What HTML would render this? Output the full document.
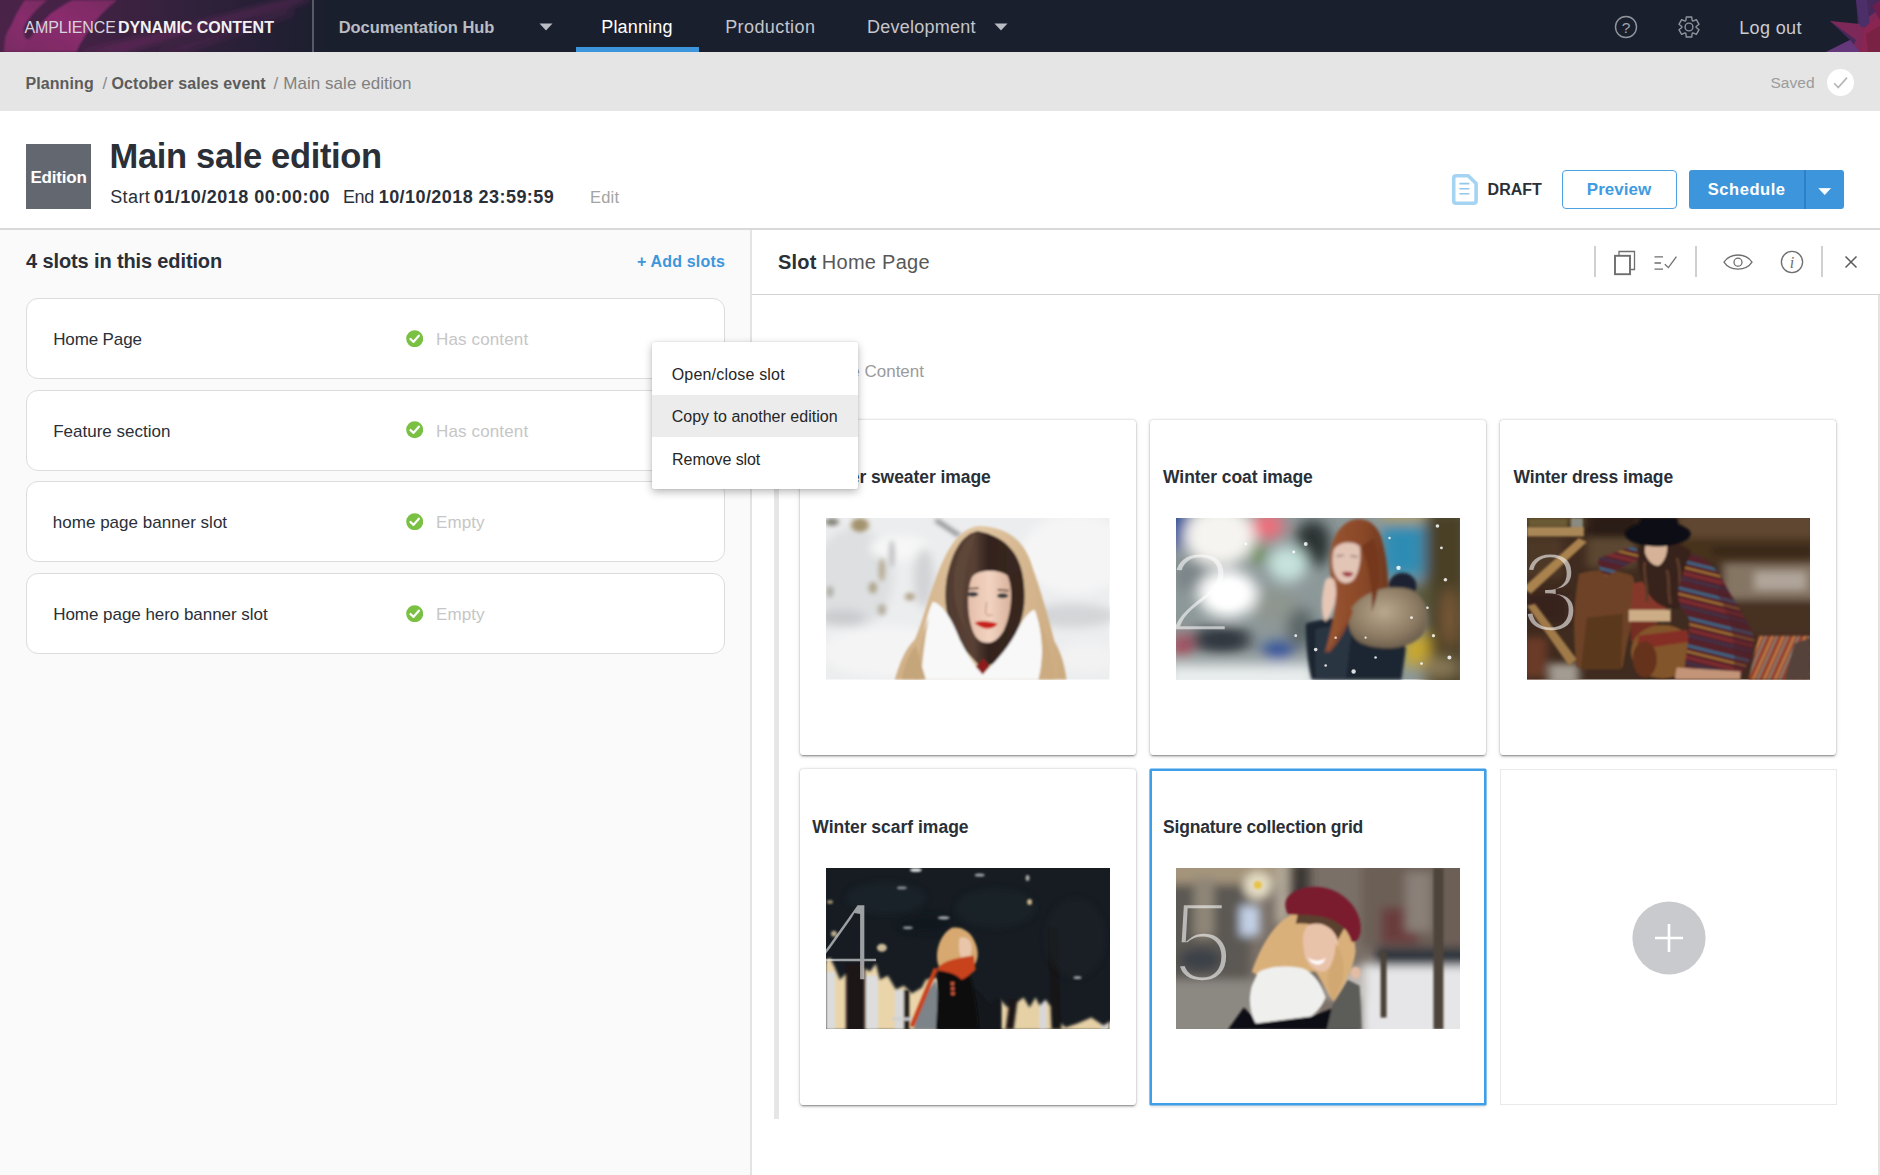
<!DOCTYPE html>
<html lang="en"><head>
<meta charset="utf-8">
<title>Main sale edition</title>
<style>
*{box-sizing:border-box;margin:0;padding:0}
html,body{width:1880px;height:1175px;overflow:hidden;background:#fff}
body{font-family:"Liberation Sans",sans-serif;color:#2a2f38;position:relative}
.abs{position:absolute;white-space:nowrap}
.b{font-weight:bold}
/* header */
#hdr{position:absolute;left:0;top:0;width:1880px;height:52px;background:#1a1f2d;overflow:hidden}
#crumb{position:absolute;left:0;top:52px;width:1880px;height:59px;background:#e5e5e5}
#titlebar{position:absolute;left:0;top:111px;width:1880px;height:119px;background:#fff;border-bottom:2px solid #d9d9d9}
#left{position:absolute;left:0;top:230px;width:752px;height:945px;background:#fafafa;border-right:2px solid #e3e3e3}
#right{position:absolute;left:752px;top:230px;width:1128px;height:945px;background:#fff}
.nav{position:absolute;top:15px;font-size:18px;color:#c4c6cc;white-space:nowrap;line-height:24px}
.slot{position:absolute;left:26px;width:698.6px;height:81px;background:#fff;border:1.5px solid #dcdcdc;border-radius:12px}
.slot .nm{position:absolute;left:26px;top:29px;font-size:17px;line-height:22px;color:#2a2f38;white-space:nowrap}
.slot .st{position:absolute;left:409px;top:29px;font-size:17px;line-height:22px;color:#c6c6c6;white-space:nowrap}
.slot svg{position:absolute;left:378.9px;top:30.8px;width:17.4px;height:17.4px}
.card{position:absolute;width:336.2px;height:335.4px;background:#fff;border-radius:3px;box-shadow:0 3px 1px -2px rgba(0,0,0,.2),0 2px 2px 0 rgba(0,0,0,.14),0 1px 5px 0 rgba(0,0,0,.12),0 0 1.5px rgba(0,0,0,.3)}
.card .ttl{position:absolute;left:13px;top:45px;font-size:18px;line-height:24px;font-weight:bold;color:#2a2f38;white-space:nowrap}
.card svg.im{position:absolute;left:26.8px;top:98.5px;width:283.4px;height:161.5px}
.card.sel{border:2px solid #3f9ee8;border-radius:1px;box-shadow:0 0 0 .6px #3f9ee8,0 2px 3px rgba(0,0,0,.12)}
.card.sel .ttl{left:12px;top:44px}
.card.sel svg.im{left:24.8px;top:96.5px}
</style>
</head>
<body>
<div id="hdr">
<svg class="abs" style="left:0;top:0" width="330" height="52" viewBox="0 0 330 52">
<defs>
<linearGradient id="lg1" x1="0" x2="1" y1="0" y2="0"><stop offset="0" stop-color="#4b2349"></stop><stop offset=".3" stop-color="#402243"></stop><stop offset=".6" stop-color="#30213b"></stop><stop offset=".85" stop-color="#221f33"></stop><stop offset="1" stop-color="#1a1f2d"></stop></linearGradient>
<linearGradient id="lg2" x1="0" x2="1" y1="1" y2="0"><stop offset="0" stop-color="#7c2a64"></stop><stop offset=".5" stop-color="#8e2d70"></stop><stop offset="1" stop-color="#7a2a62"></stop></linearGradient>
<filter id="bl1" x="-20%" y="-20%" width="140%" height="140%"><feGaussianBlur stdDeviation="0.9"></feGaussianBlur></filter>
<filter id="bl3" x="-20%" y="-20%" width="140%" height="140%"><feGaussianBlur stdDeviation="3.5"></feGaussianBlur></filter>
</defs>
<rect width="330" height="52" fill="url(#lg1)"></rect>
<g filter="url(#bl1)">
<path d="M24.700 0 L47.600 0 C38 8 30 16 24.700 25.500 C23 30 24 35 26 39 L37 40 L30 52 L4 52 C4 46 5 42 5 38 C7 32 9 28 11 25.500 C15 16 20 7 24.700 0Z" fill="url(#lg2)" opacity=".92"></path>
<path d="M73 0 L117.400 0 C104 10 92 24 84 38 C80 44 78 48 76.600 52 L21 52 C28 40 38 26 50 14 C58 8 66 3 73 0Z" fill="url(#lg2)" opacity=".95"></path>
</g>
<g filter="url(#bl3)">
<path d="M76 52 C110 46 170 30 300 -4 L312 0 C200 30 150 44 124 52Z" fill="#7a2a68" opacity=".5"></path>
<path d="M150 52 C190 42 230 28 290 8 L296 14 C240 34 200 46 184 52Z" fill="#5e2858" opacity=".4"></path>
</g>
</svg>
<div id="h_a" class="abs" style="left: 24.4px; top: 18px; font-size: 16px; line-height: 20px; color: rgb(216, 212, 220); letter-spacing: -0.12px; right: auto;">AMPLIENCE</div>
<div id="h_d" class="abs b" style="left: 117.9px; top: 18px; font-size: 16px; line-height: 20px; color: rgb(242, 242, 242); letter-spacing: -0.03px; right: auto;">DYNAMIC CONTENT</div>
<div class="abs" style="left:312px;top:0;width:1.5px;height:52px;background:#555b66"></div>
<div id="n_doc" class="nav b" style="left: 338.7px; color: rgb(185, 188, 195); font-size: 16.5px; letter-spacing: -0.07px; right: auto; top: 15px;">Documentation Hub</div>
<svg class="abs" style="left:539px;top:23px" width="14" height="8" viewBox="0 0 14 8"><path d="M0.5 0.5 L13.5 0.5 L7 7.5Z" fill="#b9bcc3"></path></svg>
<div id="n_pl" class="nav" style="left: 601.3px; color: rgb(255, 255, 255); font-size: 18px; letter-spacing: 0.15px; right: auto; top: 15px;">Planning</div>
<div class="abs" style="left:576px;top:47px;width:123px;height:5px;background:#3d96dc"></div>
<div id="n_pr" class="nav" style="left: 725.2px; font-size: 18px; letter-spacing: 0.41px; right: auto; top: 15px;">Production</div>
<div id="n_dev" class="nav" style="left: 867px; font-size: 18px; letter-spacing: 0.25px; right: auto; top: 15px;">Development</div>
<svg class="abs" style="left:994px;top:23px" width="14" height="8" viewBox="0 0 14 8"><path d="M0.5 0.5 L13.5 0.5 L7 7.5Z" fill="#b9bcc3"></path></svg>
<svg class="abs" style="left:1613px;top:13.800px" width="26" height="26" viewBox="0 0 26 26"><circle cx="13" cy="13" r="10.500" fill="none" stroke="#91959e" stroke-width="1.400"/><text x="13" y="18.600" text-anchor="middle" font-family="Liberation Sans, sans-serif" font-size="15.500" fill="#a0a4ac">?</text></svg>
<svg class="abs" style="left:1676.600px;top:14.800px" width="24" height="24" viewBox="0 0 24 24"><path d="M8.84 5.53 L9.31 1.95 L14.69 1.95 L15.16 5.53 L16.03 6.03 L19.35 4.65 L22.05 9.31 L19.18 11.50 L19.18 12.50 L22.05 14.69 L19.35 19.35 L16.03 17.97 L15.16 18.47 L14.69 22.05 L9.31 22.05 L8.84 18.47 L7.97 17.97 L4.65 19.35 L1.95 14.69 L4.82 12.50 L4.82 11.50 L1.95 9.31 L4.65 4.65 L7.97 6.03Z" fill="none" stroke="#91959e" stroke-width="1.400" stroke-linejoin="round"/><circle cx="12" cy="12" r="3.900" fill="none" stroke="#91959e" stroke-width="1.400"/></svg>
<div id="n_lo" class="nav" style="left: 1739.2px; top: 16px; color: rgb(201, 203, 208); font-size: 18px; letter-spacing: 0.37px; right: auto;">Log out</div>
<svg class="abs" style="left:1820px;top:0" width="60" height="52" viewBox="0 0 60 52">
<path d="M36 0 L60 0 L60 52 L6 52 L30 40 L10 21 L38 26Z" fill="#46285a"></path>
<path d="M10 21 L40 24 L60 8 L60 52 L30 52 L36 40Z" fill="#7c2858"></path>
<path d="M36 0 L47 0 L50 30 L40 26Z" fill="#4c2e68"></path>
<path d="M44 28 L60 14 L60 52 L40 52Z" fill="#8a2450"></path>
<path d="M6 52 L30 40 L40 52Z" fill="#64387a"></path>
<path d="M52 6 L60 0 L60 20Z" fill="#6e1e4c"></path>
<path d="M46 34 L60 26 L60 52 L48 52Z" fill="#7a2244"></path>
</svg>
</div>
<div id="crumb">
<div id="c_p" class="abs b" style="left: 25.4px; top: 21px; font-size: 16px; line-height: 22px; color: rgb(92, 92, 92); letter-spacing: 0.11px; right: auto;">Planning</div>
<div class="abs" style="left:102.5px;top:21px;font-size:17px;line-height:22px;color:#8a8a8a">/</div>
<div id="c_o" class="abs b" style="left: 111.4px; top: 21px; font-size: 16px; line-height: 22px; color: rgb(92, 92, 92); letter-spacing: 0.12px; right: auto;">October sales event</div>
<div class="abs" style="left:273.5px;top:21px;font-size:17px;line-height:22px;color:#8a8a8a">/</div>
<div id="c_m" class="abs" style="left: 283.3px; top: 21px; font-size: 17px; line-height: 22px; color: rgb(128, 128, 128); letter-spacing: 0.04px; right: auto;">Main sale edition</div>
<div class="abs" style="left: 1770.4px; top: 21px; font-size: 15.5px; line-height: 20px; color: rgb(155, 155, 155); letter-spacing: 0.08px; right: auto;" id="c_s">Saved</div>
<svg class="abs" style="left:1827px;top:17px" width="27" height="27" viewBox="0 0 27 27"><circle cx="13.5" cy="13.5" r="13.5" fill="#fff"></circle><path d="M7.2 14.2 L11.2 18.6 L20 8.6" fill="none" stroke="#b5b5b5" stroke-width="1.6"></path></svg>
</div>
<div id="titlebar">
<div class="abs b" style="left:26px;top:32.6px;width:65.2px;height:65px;background:#636870;color:#fff;font-size:17px;line-height:68px;text-align:center;letter-spacing:-.2px"><span id="t_e">Edition</span></div>
<div id="t_m" class="abs b" style="left: 109.6px; top: 23px; font-size: 34.5px; line-height: 44px; color: rgb(42, 47, 56); letter-spacing: -0.34px; right: auto;">Main sale edition</div>
<div id="t_s" class="abs" style="left: 110.2px; top: 74px; font-size: 18px; line-height: 24px; color: rgb(42, 47, 56); letter-spacing: 0.41px; right: auto;">Start</div>
<div id="t_sd" class="abs b" style="left: 153.8px; top: 74px; font-size: 18px; line-height: 24px; color: rgb(42, 47, 56); letter-spacing: 0.48px; right: auto;">01/10/2018 00:00:00</div>
<div id="t_en" class="abs" style="left: 342.9px; top: 74px; font-size: 18px; line-height: 24px; color: rgb(42, 47, 56); letter-spacing: -0.39px; right: auto;">End</div>
<div id="t_ed2" class="abs b" style="left: 378.7px; top: 74px; font-size: 18px; line-height: 24px; color: rgb(42, 47, 56); letter-spacing: 0.44px; right: auto;">10/10/2018 23:59:59</div>
<div class="abs" style="left: 590px; top: 75px; font-size: 16.5px; line-height: 22px; color: rgb(163, 163, 163); letter-spacing: 0.21px; right: auto;" id="t_ed">Edit</div>
<svg class="abs" style="left:1450px;top:60px" width="30" height="36" viewBox="0 0 30 36"><path d="M6.200 4.700 L18.200 4.700 L26.100 12.600 L26.100 29.700 Q26.100 32.200 23.600 32.200 L6.200 32.200 Q3.700 32.200 3.700 29.700 L3.700 7.200 Q3.700 4.700 6.200 4.700Z" fill="#fff" stroke="#a5d4f2" stroke-width="3.600" stroke-linejoin="round"></path><path d="M9.400 12.600 H19.400 M9.400 17.700 H19.400 M9.400 22.800 H19.400" stroke="#93c7ea" stroke-width="1.600"></path></svg>
<div class="abs b" style="left: 1487.6px; top: 68px; font-size: 16px; line-height: 22px; color: rgb(42, 47, 56); letter-spacing: 0px; right: auto;" id="t_dr">DRAFT</div>
<div class="abs b" style="left:1561.5px;top:59px;width:115px;height:39px;border:1.5px solid #4da2e4;border-radius:4px;color:#3f9be2;font-size:17px;line-height:37px;text-align:center;font-weight:bold"><span id="t_pv">Preview</span></div>
<div class="abs" style="left:1689px;top:59px;width:155px;height:39px;background:#3d96dc;border-radius:3px"></div>
<div class="abs b" style="left: 1707.7px; top: 66px; font-size: 16.5px; line-height: 24px; color: rgb(255, 255, 255); letter-spacing: 0.57px; right: auto;" id="t_sc">Schedule</div>
<div class="abs" style="left:1804px;top:59px;width:1.5px;height:39px;background:#2f7fc4"></div>
<svg class="abs" style="left:1817.600px;top:76.900px" width="13.400" height="6.900" viewBox="0 0 13.400 6.900"><path d="M0.800 0.300 L12.600 0.300 L6.700 6.700Z" fill="#fff" stroke="#fff" stroke-width=".6" stroke-linejoin="round"></path></svg>
</div>
<div id="left">
<div id="l_h" class="abs b" style="left: 26.1px; top: 18px; font-size: 20px; line-height: 26px; color: rgb(42, 47, 56); letter-spacing: -0.13px; right: auto;">4 slots in this edition</div>
<div id="l_add" class="abs b" style="left: 637.1px; top: 21px; font-size: 16px; line-height: 22px; color: rgb(61, 150, 220); letter-spacing: 0.16px; right: auto;">+ Add slots</div>
<div class="slot" style="top:68px"><div class="nm" id="sn0" style="font-size: 17px; letter-spacing: -0.13px; right: auto; left: 26.2px; top: 30px;">Home Page</div><svg width="18" height="18" viewBox="0 0 18 18"><circle cx="9" cy="9" r="8.8" fill="#7ac143"></circle><path d="M4.6 9.3 L7.8 12.3 L13.3 5.9" fill="none" stroke="#fff" stroke-width="2.3" stroke-linecap="round" stroke-linejoin="round"></path></svg><div class="st" id="ss0" style="font-size: 17px; letter-spacing: 0.14px; right: auto; left: 409px; top: 30px;">Has content</div></div>
<div class="slot" style="top:159.6px"><div class="nm" id="sn1" style="font-size: 17px; letter-spacing: 0px; right: auto; left: 26.2px; top: 30.4px;">Feature section</div><svg width="18" height="18" viewBox="0 0 18 18"><circle cx="9" cy="9" r="8.8" fill="#7ac143"></circle><path d="M4.6 9.3 L7.8 12.3 L13.3 5.9" fill="none" stroke="#fff" stroke-width="2.3" stroke-linecap="round" stroke-linejoin="round"></path></svg><div class="st" id="ss1" style="font-size: 17px; letter-spacing: 0.14px; right: auto; left: 409px; top: 30.4px;">Has content</div></div>
<div class="slot" style="top:251.2px"><div class="nm" id="sn2" style="font-size: 17px; letter-spacing: 0.02px; right: auto; left: 25.8px; top: 29.8px;">home page banner slot</div><svg width="18" height="18" viewBox="0 0 18 18"><circle cx="9" cy="9" r="8.8" fill="#7ac143"></circle><path d="M4.6 9.3 L7.8 12.3 L13.3 5.9" fill="none" stroke="#fff" stroke-width="2.3" stroke-linecap="round" stroke-linejoin="round"></path></svg><div class="st" id="ss2" style="font-size: 17px; letter-spacing: 0.09px; right: auto; left: 409px; top: 29.8px;">Empty</div></div>
<div class="slot" style="top:342.8px"><div class="nm" id="sn3" style="font-size: 17px; letter-spacing: -0.04px; right: auto; left: 26.2px; top: 30.2px;">Home page hero banner slot</div><svg width="18" height="18" viewBox="0 0 18 18"><circle cx="9" cy="9" r="8.8" fill="#7ac143"></circle><path d="M4.6 9.3 L7.8 12.3 L13.3 5.9" fill="none" stroke="#fff" stroke-width="2.3" stroke-linecap="round" stroke-linejoin="round"></path></svg><div class="st" id="ss3" style="font-size: 17px; letter-spacing: 0.09px; right: auto; left: 409px; top: 30.2px;">Empty</div></div>
</div>
<div id="right">
<div id="r_s1" class="abs b" style="left: 25.9px; top: 19px; font-size: 20px; line-height: 26px; color: rgb(42, 47, 56); letter-spacing: 0.25px; right: auto;">Slot</div>
<div id="r_s2" class="abs" style="left: 69.8px; top: 19px; font-size: 20px; line-height: 26px; color: rgb(88, 88, 88); letter-spacing: 0.27px; right: auto;">Home Page</div>
<div class="abs" style="left:0;top:63.5px;width:1128px;height:1.5px;background:#d4d4d4"></div>
<div class="abs" style="left:1126px;top:65px;width:2px;height:880px;background:#e3e3e3"></div>
<div class="abs" style="left:842px;top:16px;width:1.5px;height:31px;background:#d0d0d0"></div>
<div class="abs" style="left:943px;top:16px;width:1.5px;height:31px;background:#d0d0d0"></div>
<div class="abs" style="left:1069px;top:16px;width:1.5px;height:31px;background:#d0d0d0"></div>
<svg class="abs" style="left:860px;top:19px" width="26" height="28" viewBox="0 0 26 28"><path d="M7 6.5 V2.5 H22.5 V20.5 H18.5" fill="none" stroke="#6e6e6e" stroke-width="1.3"></path><rect x="3" y="6.8" width="15" height="18.4" fill="none" stroke="#6e6e6e" stroke-width="1.9"></rect></svg>
<svg class="abs" style="left:901px;top:24px" width="26" height="18" viewBox="0 0 26 18"><path d="M1.5 2.8 H10 M1.5 9 H8 M1.5 15.2 H10" fill="none" stroke="#6e6e6e" stroke-width="1.3"></path><path d="M11.8 10.2 L15.4 13.6 L23.4 2.6" fill="none" stroke="#6e6e6e" stroke-width="1.3"></path></svg>
<svg class="abs" style="left:970px;top:22px" width="32" height="20" viewBox="0 0 32 20"><path d="M2 10.2 C8 0.6 24 0.6 30 10.2 C24 19.4 8 19.4 2 10.2Z" fill="none" stroke="#6e6e6e" stroke-width="1.3"></path><circle cx="16" cy="10.2" r="4" fill="none" stroke="#6e6e6e" stroke-width="1.3"></circle></svg>
<svg class="abs" style="left:1028px;top:20px" width="24" height="24" viewBox="0 0 24 24"><circle cx="12" cy="12" r="10.6" fill="none" stroke="#6e6e6e" stroke-width="1.3"></circle><text x="12" y="17.6" text-anchor="middle" font-family="Liberation Serif, serif" font-style="italic" font-size="16" fill="#6e6e6e">i</text></svg>
<svg class="abs" style="left:1092px;top:25px" width="14" height="14" viewBox="0 0 14 14"><path d="M1.5 1.5 L12.5 12.5 M12.5 1.5 L1.5 12.5" stroke="#5a5a5a" stroke-width="1.5"></path></svg>
<div id="r_cont" class="abs" style="right: 956px; top: 131px; font-size: 17px; line-height: 22px; color: rgb(155, 155, 155); letter-spacing: 0px;">Home Page Content</div>
<div class="abs" style="left:22px;top:112px;width:5px;height:777px;background:#e6e6e6"></div>
<!--CARDS--><div class="card" style="left:47.5px;top:189.7px"><div class="ttl" id="ct0" style="font-size: 17.5px; letter-spacing: -0.07px; right: auto; left: 12.8px; top: 45.3px;">Winter sweater image</div><svg class="im" viewBox="0 0 284 162" preserveAspectRatio="none">
<defs><filter id="f1a" x="-30%" y="-30%" width="160%" height="160%"><feGaussianBlur stdDeviation="5"></feGaussianBlur></filter><filter id="f1b" x="-10%" y="-10%" width="120%" height="120%"><feGaussianBlur stdDeviation="1.3"></feGaussianBlur></filter><filter id="f1c" x="-10%" y="-10%" width="120%" height="120%"><feGaussianBlur stdDeviation="2.4"></feGaussianBlur></filter>
<linearGradient id="g1h" x1="0" x2="1" y1="0" y2="0"><stop offset="0" stop-color="#4f3a30"></stop><stop offset=".35" stop-color="#5a4236"></stop><stop offset=".55" stop-color="#33231d"></stop><stop offset="1" stop-color="#3a2922"></stop></linearGradient>
<linearGradient id="g1f" x1="0" x2="1" y1="0" y2="0"><stop offset="0" stop-color="#e4bfaa"></stop><stop offset=".5" stop-color="#f1d3c1"></stop><stop offset="1" stop-color="#d9b29c"></stop></linearGradient>
<linearGradient id="g1k" x1="0" x2="1" y1="0" y2="0"><stop offset="0" stop-color="#cfae84"></stop><stop offset=".5" stop-color="#e0c6a2"></stop><stop offset="1" stop-color="#cba97e"></stop></linearGradient></defs>
<rect width="284" height="162" fill="#ecedee"></rect>
<g filter="url(#f1a)">
<ellipse cx="28" cy="60" rx="40" ry="50" fill="#dddfe1"></ellipse>
<ellipse cx="250" cy="36" rx="54" ry="40" fill="#f5f5f6"></ellipse>
<ellipse cx="246" cy="98" rx="44" ry="12" fill="#d4d5d8"></ellipse>
<ellipse cx="60" cy="134" rx="64" ry="26" fill="#f4f4f5"></ellipse>
<ellipse cx="16" cy="100" rx="24" ry="8" fill="#c9cacd"></ellipse>
<ellipse cx="74" cy="30" rx="30" ry="12" fill="#f7f7f7"></ellipse>
<ellipse cx="98" cy="60" rx="10" ry="30" fill="#d2d3d6"></ellipse>
<ellipse cx="262" cy="140" rx="30" ry="16" fill="#f2f2f3"></ellipse>
</g>
<g filter="url(#f1c)">
<ellipse cx="34" cy="7" rx="9" ry="7" fill="#a3936e"></ellipse>
<ellipse cx="6" cy="4" rx="7" ry="4" fill="#86847a"></ellipse>
<ellipse cx="56" cy="52" rx="3" ry="12" fill="#b3a88e"></ellipse>
<ellipse cx="47" cy="70" rx="4" ry="6" fill="#ada38b"></ellipse>
<ellipse cx="84" cy="79" rx="5" ry="4" fill="#b0a389"></ellipse>
<ellipse cx="56" cy="92" rx="4" ry="6" fill="#b5ad9d"></ellipse>
<ellipse cx="4" cy="74" rx="3" ry="6" fill="#a9a79f"></ellipse>
<path d="M110 2 L134 18" stroke="#86868a" stroke-width="4"></path>
<ellipse cx="66" cy="36" rx="3" ry="14" fill="#c1c1c4"></ellipse>
</g>
<g filter="url(#f1b)">
<path d="M153 8 C130 11 119 38 111 58 C101 84 97 104 89 122 C77 134 73 150 69 162 L241 162 C239 146 235 134 229 124 C223 100 215 72 207 50 C201 28 187 9 153 8Z" fill="url(#g1k)"></path>
<path d="M152 13 C133 17 125 40 121 60 C117 84 121 108 135 128 L156 151 L171 145 C187 128 199 104 199 80 C199 52 193 21 152 13Z" fill="url(#g1h)"></path>
<path d="M146 60 C150 52 172 50 182 58 C188 72 186 96 178 113 C170 127 158 129 150 119 C142 107 140 76 146 60Z" fill="url(#g1f)"></path>
<path d="M150 16 C142 40 136 64 138 100 C140 112 146 122 152 128 C140 116 126 92 128 60 C130 40 138 22 150 16Z" fill="#5d4638"></path>
<path d="M186 56 C190 76 190 100 176 126 C192 110 199 80 195 54Z" fill="#37251e"></path>
<ellipse cx="147" cy="76.500" rx="5.5" ry="2.4" fill="#3a3d3c"></ellipse>
<ellipse cx="177" cy="78" rx="5.5" ry="2.4" fill="#3a3d3c"></ellipse>
<path d="M143 71 L153 70.500 M172 72 L183 73" stroke="#4a342a" stroke-width="1.4"></path>
<path d="M161 84 C160 92 159 96 162 98 L167 97" fill="none" stroke="#d3a892" stroke-width="1.6"></path>
<path d="M149 105 C155 102.500 166 103.500 172 106 C168 112.500 156 112.500 149 105Z" fill="#c9211b"></path>
<path d="M107 84 C116 86 126 100 134 122 C142 138 150 150 157 157 C166 148 180 134 190 116 C196 104 202 94 209 92 C217 110 219 140 213 162 L93 162 C95 130 99 100 107 84Z" fill="#f8f8f8"></path>
<path d="M150 149 L157 157 L164 149 L158 141Z" fill="#8e1c1c"></path>
<path d="M95 162 C97 140 99 120 103 100 C99 110 93 130 89 162Z" fill="#ceae84"></path>
<path d="M213 162 C219 140 217 116 211 96 C221 116 227 140 229 162Z" fill="#cdab80"></path>
<path d="M76 162 C78 150 82 138 90 128 L100 162Z" fill="#c5a57a"></path>
</g>
</svg></div>
<div class="card" style="left:397.5px;top:189.7px"><div class="ttl" id="ct1" style="font-size: 17.5px; letter-spacing: -0.05px; right: auto; left: 13.5px; top: 45.3px;">Winter coat image</div><svg class="im" viewBox="0 0 284 162" preserveAspectRatio="none">
<defs><filter id="f2a" x="-30%" y="-30%" width="160%" height="160%"><feGaussianBlur stdDeviation="7"></feGaussianBlur></filter><filter id="f2b" x="-10%" y="-10%" width="120%" height="120%"><feGaussianBlur stdDeviation="1.4"></feGaussianBlur></filter><filter id="f2c" x="-20%" y="-20%" width="140%" height="140%"><feGaussianBlur stdDeviation="3"></feGaussianBlur></filter><filter id="f2d" x="-20%" y="-20%" width="140%" height="140%"><feGaussianBlur stdDeviation=".7"></feGaussianBlur></filter>
<linearGradient id="g2h" x1="0" x2="1" y1="0" y2="0"><stop offset="0" stop-color="#9a5632"></stop><stop offset=".6" stop-color="#8a4828"></stop><stop offset="1" stop-color="#6e381e"></stop></linearGradient>
<radialGradient id="g2f" cx=".45" cy=".4" r=".7"><stop offset="0" stop-color="#b9a88e"></stop><stop offset=".6" stop-color="#8c7a62"></stop><stop offset="1" stop-color="#5e5244"></stop></radialGradient></defs>
<rect width="284" height="162" fill="#8d9899"></rect>
<g filter="url(#f2a)">
<rect x="-10" y="-10" width="24" height="40" fill="#23489a"></rect>
<ellipse cx="44" cy="18" rx="36" ry="30" fill="#f6f4f0"></ellipse>
<ellipse cx="92" cy="8" rx="16" ry="14" fill="#ee6e7c"></ellipse>
<ellipse cx="82" cy="36" rx="9" ry="9" fill="#62883f"></ellipse>
<ellipse cx="137" cy="26" rx="18" ry="24" fill="#2a3232"></ellipse>
<ellipse cx="112" cy="46" rx="20" ry="18" fill="#c6e2dc"></ellipse>
<ellipse cx="16" cy="58" rx="18" ry="16" fill="#7a8488"></ellipse>
<ellipse cx="52" cy="76" rx="30" ry="24" fill="#ffffff"></ellipse>
<ellipse cx="100" cy="88" rx="22" ry="18" fill="#8f9690"></ellipse>
<ellipse cx="46" cy="122" rx="30" ry="14" fill="#2e363c"></ellipse>
<ellipse cx="6" cy="128" rx="10" ry="12" fill="#a84456"></ellipse>
<ellipse cx="102" cy="134" rx="16" ry="10" fill="#2a4f9c"></ellipse>
<ellipse cx="125" cy="110" rx="14" ry="20" fill="#5c6668"></ellipse>
<rect x="-10" y="146" width="150" height="30" fill="#eaeeee"></rect>
<rect x="206" y="4" width="42" height="54" fill="#2f8cb4"></rect>
<rect x="206" y="-6" width="42" height="10" fill="#c8a62c"></rect>
<rect x="250" y="-10" width="44" height="190" fill="#4a4026"></rect>
<rect x="228" y="118" width="26" height="30" fill="#c9a82e"></rect>
<ellipse cx="240" cy="80" rx="16" ry="14" fill="#5a5a3c"></ellipse>
<ellipse cx="264" cy="150" rx="20" ry="10" fill="#8a7a58"></ellipse>
<ellipse cx="274" cy="100" rx="8" ry="30" fill="#7a5a38"></ellipse>
</g>
<ellipse cx="52" cy="76" rx="15" ry="13" fill="#fff" filter="url(#f2c)"></ellipse>
<g filter="url(#f2b)">
<path d="M130 106 C148 100 176 98 200 104 C220 112 232 122 230 134 L226 162 L136 162 C132 146 130 126 130 106Z" fill="#1d2530"></path>
<path d="M140 112 C150 108 166 108 176 112 L170 162 L140 162Z" fill="#2b3542"></path>
<ellipse cx="227" cy="68" rx="14" ry="13" fill="#1a2230"></ellipse>
<path d="M182 1 C164 3 154 22 154 44 C154 60 158 72 160 84 C158 100 154 120 149 136 C160 124 170 104 178 92 L212 88 C214 66 212 40 206 20 C202 8 194 1 182 1Z" fill="url(#g2h)"></path>
<path d="M176 90 C190 72 214 66 236 72 C252 80 256 100 248 116 C236 132 206 134 186 126 C172 118 170 102 176 90Z" fill="url(#g2f)"></path>
<path d="M158 32 C162 24 176 22 184 28 C186 40 184 54 178 62 C172 68 164 66 160 58 C156 50 156 40 158 32Z" fill="#e3c5b6"></path>
<path d="M161 38 L168 37.500 M175 38 L182 39" stroke="#6a5a58" stroke-width="1.3"></path>
<path d="M166 55 C170 53 176 54 178 56 C175 60 169 60 166 55Z" fill="#9c2d3a"></path>
<path d="M150 62 C154 58 160 60 160 68 C162 80 158 94 150 104 C144 96 146 74 150 62Z" fill="#e6c6b5"></path>
<path d="M186 28 C194 50 198 76 196 94 C206 70 206 40 198 20Z" fill="#74391f"></path>
<path d="M176 92 C172 106 162 124 152 134" fill="none" stroke="#8e4a2a" stroke-width="3"></path>
</g>
<g fill="#fff" opacity=".85" filter="url(#f2d)"><circle cx="130" cy="26" r="2"></circle><circle cx="118" cy="34" r="1.5"></circle><circle cx="223" cy="50" r="2.2"></circle><circle cx="262" cy="8" r="1.8"></circle><circle cx="270" cy="62" r="1.8"></circle><circle cx="178" cy="154" r="2.2"></circle><circle cx="140" cy="132" r="1.8"></circle><circle cx="258" cy="118" r="1.6"></circle><circle cx="274" cy="140" r="2"></circle><circle cx="120" cy="118" r="1.4"></circle><circle cx="70" cy="26" r="1.4"></circle><circle cx="236" cy="100" r="1.4"></circle><circle cx="200" cy="140" r="1.3"></circle><circle cx="160" cy="120" r="1.2"></circle><circle cx="266" cy="30" r="1.4"></circle><circle cx="252" cy="90" r="1.3"></circle><circle cx="150" cy="148" r="1.3"></circle><circle cx="214" cy="20" r="1.2"></circle><circle cx="246" cy="146" r="1.4"></circle><circle cx="190" cy="120" r="1.1"></circle></g>
<mask id="nm2" maskUnits="userSpaceOnUse" x="-10" y="0" width="120" height="162"><text x="-9" y="114.2" font-family="Liberation Sans, sans-serif" font-size="116" fill="#fff" stroke="#000" stroke-width="5.6" transform="scale(1.04 1)">2</text></mask><rect x="-10" y="20" width="100" height="110" fill="#fff" opacity=".58" mask="url(#nm2)"></rect>
</svg></div>
<div class="card" style="left:748.2px;top:189.7px"><div class="ttl" id="ct2" style="font-size: 17.5px; letter-spacing: -0.09px; right: auto; left: 13.2px; top: 45.3px;">Winter dress image</div><svg class="im" viewBox="0 0 284 162" preserveAspectRatio="none">
<defs><filter id="f3a" x="-30%" y="-30%" width="160%" height="160%"><feGaussianBlur stdDeviation="4"></feGaussianBlur></filter><filter id="f3b" x="-10%" y="-10%" width="120%" height="120%"><feGaussianBlur stdDeviation="1.2"></feGaussianBlur></filter>
<pattern id="st3" width="10" height="27" patternUnits="userSpaceOnUse" patternTransform="rotate(14)"><rect width="10" height="27" fill="#54242c"></rect><rect y="3" width="10" height="2.6" fill="#376a8c"></rect><rect y="9" width="10" height="2" fill="#a8772e"></rect><rect y="14" width="10" height="3.4" fill="#7e2c2e"></rect><rect y="20" width="10" height="2.6" fill="#3d3248"></rect></pattern>
<pattern id="st3b" width="9" height="10" patternUnits="userSpaceOnUse" patternTransform="rotate(-66)"><rect width="9" height="10" fill="#97412c"></rect><rect y="2" width="9" height="2" fill="#bf844c"></rect><rect y="6" width="9" height="2" fill="#848074"></rect></pattern></defs>
<rect width="284" height="162" fill="#3f2b1f"></rect>
<g filter="url(#f3a)">
<rect x="150" y="-6" width="140" height="28" fill="#5e4630"></rect>
<rect x="150" y="20" width="140" height="26" fill="#47321f"></rect>
<rect x="196" y="46" width="96" height="36" fill="#857564"></rect>
<rect x="228" y="54" width="52" height="18" fill="#b0a59a"></rect>
<rect x="196" y="84" width="96" height="34" fill="#463223"></rect>
<rect x="60" y="-4" width="54" height="46" fill="#2c1f17"></rect>
<rect x="-4" y="-4" width="60" height="12" fill="#5a4a2a"></rect>
<rect x="-4" y="20" width="40" height="40" fill="#4e3826"></rect>
<rect x="-4" y="76" width="44" height="30" fill="#38221a"></rect>
<rect x="-4" y="120" width="24" height="40" fill="#6a3a28"></rect>
<rect x="22" y="146" width="30" height="22" fill="#a39c92"></rect>
<rect x="60" y="20" width="50" height="30" fill="#5c4630"></rect>
<rect x="186" y="30" width="100" height="6" fill="#2e2016"></rect>
</g>
<g filter="url(#f3b)">
<rect x="0" y="9" width="57" height="9.500" fill="#a98757"></rect>
<rect x="44" y="0" width="12" height="9" fill="#8a8a80"></rect>
<rect x="2" y="1" width="38" height="7" fill="#6a5a34"></rect>
<path d="M52 20 L60 24 L4 76 L-4 70Z" fill="#a9824e"></path>
<path d="M0 88 L8 86 L50 142 L42 148Z" fill="#a07a48"></path>
<path d="M52 56 C70 50 92 52 106 58 L112 82 C106 100 100 124 96 150 L50 150 C46 120 46 90 52 56Z" fill="#6d4326"></path>
<path d="M60 100 L96 96 L94 152 L54 152Z" fill="#5a381f"></path>
<path d="M106 66 C116 62 128 64 134 72 L140 92 L104 96Z" fill="#85382a"></path>
<rect x="102" y="92" width="42" height="12" fill="#cdad86"></rect>
<rect x="104" y="104" width="26" height="20" fill="#742e22"></rect>
<ellipse cx="136" cy="134" rx="32" ry="27" fill="#83552a"></ellipse>
<path d="M112 118 L160 112 L164 124 L110 132Z" fill="#852f27"></path>
<ellipse cx="118" cy="142" rx="12" ry="18" fill="#65311e"></ellipse>
<path d="M72 40 L108 28 L114 40 L80 58 C74 56 70 48 72 40Z" fill="url(#st3)"></path>
<path d="M112 30 C112 20 150 18 164 34 C170 50 168 70 160 86 C150 96 130 90 122 76 C114 62 110 46 112 30Z" fill="#37211a"></path>
<path d="M118 44 C116 58 122 70 120 84 M150 40 C156 54 150 66 156 82 M140 52 C144 62 140 74 144 86" fill="none" stroke="#5a3b29" stroke-width="3"></path>
<path d="M164 36 C180 38 192 52 200 70 C212 90 224 108 228 122 C226 140 220 150 214 156 L158 150 C160 130 164 112 162 100 C154 92 150 84 152 70 C156 56 160 44 164 36Z" fill="url(#st3)"></path>
<path d="M196 64 C206 80 222 104 228 122 C226 140 222 152 216 158 L206 156 C212 130 204 96 190 76Z" fill="#4c2028" opacity=".5"></path>
<path d="M150 150 L214 154 L214 162 L148 162Z" fill="#c39478"></path>
<path d="M232 118 L284 118 L284 162 L222 162Z" fill="url(#st3b)"></path>
<path d="M268 126 L284 120 L284 162 L258 162Z" fill="#55423a"></path>
<path d="M119 20 C122 18 136 18 140 24 C142 34 138 44 132 48 C126 48 120 42 118 34Z" fill="#d6b298"></path>
<ellipse cx="131" cy="16" rx="33" ry="12.500" fill="#0d0d12"></ellipse>
<path d="M114 0 L150 0 L154 14 L110 14Z" fill="#0d0d12"></path>
</g>
<mask id="nm3" maskUnits="userSpaceOnUse" x="-10" y="0" width="120" height="162"><text x="-7.1" y="114.2" font-family="Liberation Sans, sans-serif" font-size="116" fill="#fff" stroke="#000" stroke-width="5.6" transform="scale(0.935 1)">3</text></mask><rect x="-10" y="20" width="100" height="110" fill="#fff" opacity=".58" mask="url(#nm3)"></rect>
</svg></div>
<div class="card" style="left:47.5px;top:539.4px"><div class="ttl" id="ct3" style="font-size: 17.5px; letter-spacing: -0.01px; right: auto; left: 12.8px; top: 45.6px;">Winter scarf image</div><svg class="im" viewBox="0 0 284 162" preserveAspectRatio="none">
<defs><filter id="f4b" x="-10%" y="-10%" width="120%" height="120%"><feGaussianBlur stdDeviation="1"></feGaussianBlur></filter><filter id="f4c" x="-10%" y="-10%" width="120%" height="120%"><feGaussianBlur stdDeviation="1.6"></feGaussianBlur></filter><filter id="f4d" x="-10%" y="-10%" width="120%" height="120%"><feGaussianBlur stdDeviation="3"></feGaussianBlur></filter></defs>
<rect width="284" height="162" fill="#14181d"></rect>
<g filter="url(#f4b)">
<rect x="0" y="60" width="112" height="102" fill="#ead5aa"></rect>
<rect x="176" y="126" width="108" height="36" fill="#e6d1a6"></rect>
<rect x="0" y="104" width="9" height="58" fill="#dcdcdc"></rect>
<rect x="39" y="108" width="13" height="54" fill="#dddddd"></rect>
<rect x="69" y="122" width="9" height="40" fill="#d8d8d8"></rect>
<rect x="78" y="122" width="6" height="40" fill="#2a2622"></rect>
<rect x="214" y="120" width="7" height="42" fill="#d8d8d8"></rect>
<rect x="276" y="146" width="6" height="16" fill="#d8d8d8"></rect>
<rect x="66" y="150" width="22" height="3" fill="#cfcfcf"></rect>
</g>
<g filter="url(#f4c)">
<path d="M-4 -4 H288 V152 L278 158 L266 150 L252 156 L240 160 L230 150 L226 140 L220 132 L214 138 L210 130 L204 140 L198 130 L190 136 L182 140 L172 130 L164 136 L152 122 L130 118 L110 110 L100 112 L96 120 L86 126 L78 118 L70 122 L62 108 L54 112 L50 96 L44 104 L38 100 L30 110 L20 106 L14 112 L8 98 L4 90 L-4 96Z" fill="#151a20"></path>
<rect x="20" y="96" width="19" height="70" fill="#1b1715"></rect>
<path d="M184 132 L192 132 L188 162 L180 162Z" fill="#1b1715"></path>
<path d="M222 60 L232 60 L236 162 L226 162Z" fill="#121518"></path>
</g>
<g filter="url(#f4d)" opacity=".6">
<ellipse cx="60" cy="30" rx="40" ry="16" fill="#1f262e"></ellipse>
<ellipse cx="170" cy="40" rx="40" ry="20" fill="#1e252c"></ellipse>
<ellipse cx="250" cy="70" rx="30" ry="40" fill="#1b2128"></ellipse>
<ellipse cx="100" cy="56" rx="30" ry="10" fill="#10141a"></ellipse>
</g>
<g filter="url(#f4b)">
<ellipse cx="56" cy="80" rx="5" ry="4" fill="#cdbb98"></ellipse>
<ellipse cx="8" cy="66" rx="3" ry="3" fill="#b7a888"></ellipse>
<ellipse cx="4" cy="34" rx="3" ry="2" fill="#9a8c70"></ellipse>
<ellipse cx="204" cy="34" rx="2.500" ry="3" fill="#c9b48c"></ellipse>
<ellipse cx="202" cy="10" rx="2" ry="3" fill="#a9a9a4"></ellipse>
<ellipse cx="118" cy="50" rx="6" ry="1.600" fill="#a9acb0"></ellipse>
<ellipse cx="82" cy="60" rx="5" ry="1.400" fill="#9aa0a4"></ellipse>
<ellipse cx="90" cy="2" rx="6" ry="2" fill="#d5d8da"></ellipse>
<ellipse cx="154" cy="7" rx="5" ry="1.600" fill="#a5a8ab"></ellipse>
<ellipse cx="76" cy="20" rx="5" ry="1.400" fill="#8f9498"></ellipse>
<ellipse cx="252" cy="110" rx="4" ry="1.400" fill="#a5a8ab"></ellipse>
<path d="M110 112 L96 134 L88 162 L112 162 L116 148Z" fill="#7b8389"></path>
<path d="M112 104 L142 100 C148 118 152 140 153 162 L110 162 C112 140 112 120 112 104Z" fill="#0c0c0e"></path>
<path d="M112 102 L108 100 L84 158 L88 160Z" fill="#c8431f"></path>
<path d="M126 60 C136 58 146 64 150 76 C154 86 152 96 146 100 L114 100 C108 90 112 68 126 60Z" fill="#d7a870"></path>
<path d="M134 70 C140 68 146 72 146 80 C146 88 142 94 138 94 C134 92 132 78 134 70Z" fill="#e9c6aa"></path>
<path d="M110 102 C116 94 128 90 148 88 L150 102 C146 106 140 110 136 112 C128 104 118 104 110 102Z" fill="#c8431f"></path>
<circle cx="126.800" cy="116" r="2" fill="#c9583a"></circle><circle cx="127" cy="121" r="2" fill="#c9583a"></circle><circle cx="127.200" cy="126" r="2" fill="#c9583a"></circle>
</g>
<mask id="nm4" maskUnits="userSpaceOnUse" x="-10" y="0" width="120" height="162"><text x="-10.5" y="114.2" font-family="Liberation Sans, sans-serif" font-size="116" fill="#fff" stroke="#000" stroke-width="5.6" transform="scale(1.05 1)">4</text></mask><rect x="-10" y="20" width="100" height="110" fill="#fff" opacity=".58" mask="url(#nm4)"></rect>
</svg></div>
<div class="card sel" style="left:397.5px;top:539.4px"><div class="ttl" id="ct4" style="font-size: 17.5px; letter-spacing: -0.21px; right: auto; left: 11.6px; top: 43.6px;">Signature collection grid</div><svg class="im" viewBox="0 0 284 162" preserveAspectRatio="none">
<defs><filter id="f5a" x="-30%" y="-30%" width="160%" height="160%"><feGaussianBlur stdDeviation="5"></feGaussianBlur></filter><filter id="f5b" x="-10%" y="-10%" width="120%" height="120%"><feGaussianBlur stdDeviation="1.1"></feGaussianBlur></filter></defs>
<rect width="284" height="162" fill="#7a7068"></rect>
<g filter="url(#f5a)">
<rect x="-10" y="-10" width="130" height="26" fill="#a4947c"></rect>
<rect x="-10" y="16" width="84" height="100" fill="#5c5852"></rect>
<rect x="18" y="10" width="20" height="60" fill="#8f8678"></rect>
<rect x="100" y="-6" width="13" height="62" fill="#b2a999"></rect>
<rect x="114" y="-6" width="20" height="40" fill="#3c3834"></rect>
<ellipse cx="82" cy="18" rx="14" ry="14" fill="#e4dcc4"></ellipse>
<rect x="64" y="38" width="20" height="30" fill="#c2d0e6"></rect>
<rect x="-10" y="112" width="100" height="60" fill="#8c8882"></rect>
<ellipse cx="24" cy="92" rx="22" ry="12" fill="#3e4248"></ellipse>
<rect x="186" y="-10" width="110" height="90" fill="#6c5e56"></rect>
<rect x="206" y="40" width="36" height="36" fill="#6a3c3c"></rect>
<rect x="230" y="4" width="26" height="60" fill="#8a8078"></rect>
<rect x="186" y="96" width="110" height="76" fill="#e6e6e8"></rect>
<rect x="200" y="80" width="96" height="18" fill="#2e343c"></rect>
<rect x="150" y="100" width="40" height="30" fill="#bdb8b2"></rect>
</g>
<g filter="url(#f5b)">
<rect x="205" y="84" width="6" height="66" fill="#4c4238"></rect>
<rect x="258" y="0" width="10" height="162" fill="#4e443a"></rect>
<ellipse cx="82" cy="17" rx="4" ry="4" fill="#e8c24a"></ellipse>
<path d="M52 162 L68 140 L82 154 L135 149 L159 140 L184 162Z" fill="#101012"></path>
<path d="M172 112 L184 118 L186 162 L151 162 L157 137Z" fill="#5b5b59"></path>
<path d="M120 45 C100 52 86 76 76 104 C86 112 100 112 112 104 L140 104 C146 112 152 126 158 134 C168 120 178 100 180 84 C180 66 170 50 156 46Z" fill="#d9b07a"></path>
<path d="M122 46 C134 42 158 46 170 58 L160 76 C150 60 136 54 120 56Z" fill="#5a3f2e"></path>
<path d="M132 58 C142 52 158 58 162 72 C164 86 158 100 148 104 C138 104 128 94 128 80 C126 70 128 62 132 58Z" fill="#e9c2aa"></path>
<path d="M132 90 C138 94 146 94 150 90 C148 98 138 100 132 90Z" fill="#fff"></path>
<path d="M110 33 C114 22 132 16 150 20 C168 24 184 40 185 58 C186 70 180 76 176 74 C172 60 160 50 140 48 C128 46 116 48 112 46 C110 42 109 38 110 33Z" fill="#7a1b2f"></path>
<path d="M82 105 C92 98 110 98 124 100 C136 102 146 116 150 130 C146 140 140 146 135 149 L80 156 C74 146 72 132 76 118Z" fill="#efefed"></path>
<ellipse cx="180" cy="105" rx="5" ry="6" fill="#e3bca4"></ellipse>
<path d="M160 76 C168 84 170 100 166 116 C162 126 158 132 158 134 C152 124 150 110 154 100 C158 92 160 84 160 76Z" fill="#d2a872"></path>
</g>
<mask id="nm5" maskUnits="userSpaceOnUse" x="-10" y="0" width="120" height="162"><text x="-4.05" y="114.2" font-family="Liberation Sans, sans-serif" font-size="116" fill="#fff" stroke="#000" stroke-width="5.6" transform="scale(0.95 1)">5</text></mask><rect x="-10" y="20" width="100" height="110" fill="#fff" opacity=".58" mask="url(#nm5)"></rect>
</svg></div>
<div class="abs" style="left:748.2px;top:539.4px;width:336.4px;height:335.6px;border:1.5px solid #e9e9e9;background:#fff"></div>
<svg class="abs" style="left:880px;top:671px" width="74" height="74" viewBox="0 0 74 74"><circle cx="37" cy="37" r="36.6" fill="#c9cacd"></circle><path d="M37 23 V51 M23 37 H51" stroke="#fff" stroke-width="2.6"></path></svg>
<!--/CARDS-->
</div>
<div id="menu" class="abs" style="left:652px;top:342px;width:206px;height:147px;background:#fff;border-radius:2px;box-shadow:0 3px 8px rgba(0,0,0,.28),0 0 2px rgba(0,0,0,.12)">
<div class="abs" style="left:0;top:52.5px;width:206px;height:42.5px;background:#ececec"></div>
<div id="m0" class="abs" style="left: 19.7px; top: 23px; font-size: 16px; line-height: 20px; color: rgb(38, 38, 38); letter-spacing: 0.19px; right: auto;">Open/close slot</div>
<div id="m1" class="abs" style="left: 19.7px; top: 65px; font-size: 16px; line-height: 20px; color: rgb(38, 38, 38); letter-spacing: 0.02px; right: auto;">Copy to another edition</div>
<div id="m2" class="abs" style="left: 20.1px; top: 108px; font-size: 16px; line-height: 20px; color: rgb(38, 38, 38); letter-spacing: -0.07px; right: auto;">Remove slot</div>
</div>














</body></html>
